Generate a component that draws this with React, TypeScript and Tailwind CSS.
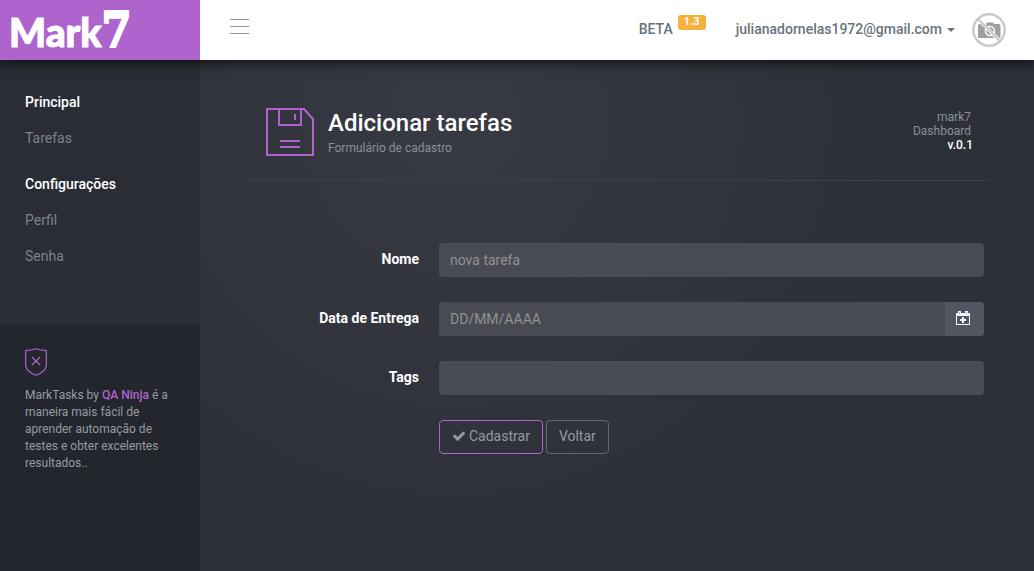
import React from "react";

function Logo() {
  return (
    <a
      href="#"
      aria-label="Mark7"
      className="flex h-[60px] w-[200px] shrink-0 items-start bg-[#ae63cd] pl-[9px] text-white"
    >
      <span className="pt-0.5 font-['Lato'] text-[39px] leading-[60px] font-black [-webkit-text-stroke:1px_white]">
        Mark
      </span>
      <span className="pt-0.5 font-['DejaVu_Serif_Condensed','DejaVu_Serif',serif] text-[48px] leading-[56px] font-bold [-webkit-text-stroke:2px_white]">
        7
      </span>
    </a>
  );
}

function Avatar() {
  return (
    <svg viewBox="0 0 34 34" className="size-[34px]" role="img" aria-label="Sem foto">
      <path
        d="M6 12.5q0-1.5 1.5-1.5H9V9.800h3V11h2l1-1.500h6l1 1.500h5q1.500 0 1.500 1.500v11q0 1.500-1.500 1.500h-19.500Q6 25 6 23.500z"
        fill="#a0a0a0"
      />
      <circle cx="18" cy="18" r="4.500" fill="#a0a0a0" stroke="#fff" strokeWidth="1.500" />
      <path d="M5.500 5.500l23 23" stroke="#fff" strokeWidth="3.600" />
      <path d="M5.500 5.500l23 23" stroke="#c9c9c9" strokeWidth="2.200" />
      <circle cx="17" cy="17" r="15.700" fill="none" stroke="#c9c9c9" strokeWidth="2.400" />
    </svg>
  );
}

function Header() {
  return (
    <header className="relative z-10 flex h-[60px] items-center bg-white text-sm font-medium text-[#6a737b] shadow-[0_0_12px_2px_rgba(0,0,0,0.8)]">
      <Logo />
      <button type="button" aria-label="Menu" className="ml-[29px] pb-2">
        <svg viewBox="0 0 20 16" className="h-4 w-5">
          <path d="M1 1.500h19M1 8.500h19M1 15.500h19" stroke="#8e979d" strokeWidth="1" />
        </svg>
      </button>
      <div className="ml-auto flex items-center pr-7">
        <a href="#beta" className="flex items-center pb-0.5">
          BETA
          <span className="mb-3.5 ml-[5px] h-[15px] w-7 rounded-[3px] bg-[#f7af3e] text-center text-[11px] leading-[14px] font-bold text-white">
            1.3
          </span>
        </a>
        <button type="button" className="ml-[30px] flex items-center gap-[5px] pb-0.5 font-medium">
          julianadornelas1972@gmail.com
          <svg viewBox="0 0 8 4" className="mt-0.5 h-1 w-2">
            <path d="M0 0h8L4 4z" fill="#6a737b" />
          </svg>
        </button>
        <div className="ml-[17px]">
          <Avatar />
        </div>
      </div>
    </header>
  );
}

const groups = [
  { title: "Principal", items: ["Tarefas"] },
  { title: "Configurações", items: ["Perfil", "Senha"] },
];

function Sidebar() {
  return (
    <aside className="flex w-[200px] shrink-0 flex-col bg-[#2a2d35]">
      <nav className="flex flex-col gap-2.5 pt-6 pb-[51px] text-sm">
        {groups.map((g) => (
          <div key={g.title}>
            <h2 className="px-[25px] py-2 font-medium text-white">{g.title}</h2>
            <ul>
              {g.items.map((i) => (
                <li key={i}>
                  <a href="#" className="block px-[25px] py-2 text-[#7d838b]">
                    {i}
                  </a>
                </li>
              ))}
            </ul>
          </div>
        ))}
      </nav>
      <div className="flex-1 bg-[#24262d] px-[25px] py-[23px]">
        <svg viewBox="0 0 22 28" className="h-7 w-[22px]" fill="none" stroke="#ae63cd" strokeWidth="1.200">
          <path d="M.7 2.600Q6.500 2.400 11 .7 15.500 2.400 21.300 2.600V17Q21.300 23.500 11 27.300.7 23.500.7 17z" />
          <path d="M7 9l8 8M15 9l-8 8" />
        </svg>
        <p className="mt-[11px] text-xs leading-[17px] text-[#949ba2]">
          MarkTasks by{" "}
          <a href="#" className="font-medium text-[#ae63cd]">
            QA Ninja
          </a>{" "}
          é a maneira mais fácil de aprender automação de testes e obter excelentes resultados..
        </p>
      </div>
    </aside>
  );
}

function PageTitle() {
  return (
    <div className="flex h-[121px] items-start border-b border-[#3d404c] pt-12 pr-4 pl-[21px]">
      <svg viewBox="0 0 48 48" className="size-12" fill="none" stroke="#ae63cd" strokeWidth="2">
        <path d="M1 1h37l9 10v36H1z" />
        <path d="M13 1v16h22V1M14 33h20M14 39h20M29 6v6" />
      </svg>
      <div className="ml-3.5">
        <h1 className="text-2xl leading-[30px] font-medium text-white">Adicionar tarefas</h1>
        <p className="text-xs leading-5 text-[#8a9098]">Formulário de cadastro</p>
      </div>
      <div className="mt-0.5 ml-auto text-right text-xs leading-[14px] text-[#8a9098]">
        <p className="pr-0.5">
          mark7
          <br />
          Dashboard
        </p>
        <p className="font-medium text-white">v.0.1</p>
      </div>
    </div>
  );
}

const row = "grid grid-cols-[160px_1fr] items-center gap-x-5";
const label = "pb-0.5 text-right text-sm font-bold text-white";
const field =
  "h-[34px] w-full min-w-0 rounded bg-[#494b54] px-[11px] text-sm text-[#c0c4c8] outline-none placeholder:text-[#919191]";

function TaskForm() {
  return (
    <form className="mt-[62px] flex flex-col gap-[25px] pr-[5px] pl-3.5" onSubmit={(e) => e.preventDefault()}>
      <div className={row}>
        <label htmlFor="nome" className={label}>
          Nome
        </label>
        <input id="nome" type="text" placeholder="nova tarefa" className={field} />
      </div>
      <div className={row}>
        <label htmlFor="data" className={label}>
          Data de Entrega
        </label>
        <div className="flex overflow-hidden rounded bg-[#494b54]">
          <input id="data" type="text" placeholder="DD/MM/AAAA" className={field} />
          <button
            type="button"
            aria-label="Abrir calendário"
            className="flex w-[39px] shrink-0 items-center bg-[#535561] pb-0.5 pl-[11px]"
          >
            <svg viewBox="0 0 14 14" className="size-3.5" shapeRendering="crispEdges">
              <path
                fillRule="evenodd"
                fill="#f2f5f7"
                d="M0 2h2V0h3v2h4V0h3v2h2v12H0zM1 5v8h12V5z"
              />
              <path d="M3 1h1v2H3zM10 1h1v2h-1z" fill="#9fb5c4" />
              <path d="M6 6h2v2h2v2H8v2H6v-2H4V8h2z" fill="#f2f5f7" />
            </svg>
          </button>
        </div>
      </div>
      <div className={row}>
        <label htmlFor="tags" className={label}>
          Tags
        </label>
        <input id="tags" type="text" className={field} />
      </div>
      <div className={row}>
        <div className="col-start-2 flex gap-[3px] text-sm text-[#949ba2]">
          <button
            type="submit"
            className="flex h-[34px] items-center gap-[3px] rounded border border-[#ae63cd] px-3 pb-0.5"
          >
            <svg viewBox="0 0 1792 1792" className="size-3.5" fill="currentColor">
              <path d="M1671 566q0 40-28 68l-724 724-136 136q-28 28-68 28t-68-28l-136-136-362-362q-28-28-28-68t28-68l136-136q28-28 68-28t68 28l294 295 656-657q28-28 68-28t68 28l136 136q28 28 28 68z" />
            </svg>
            Cadastrar
          </button>
          <button type="button" className="h-[34px] rounded border border-[#616779] px-3 pb-0.5">
            Voltar
          </button>
        </div>
      </div>
    </form>
  );
}

export default function App() {
  return (
    <div className="flex min-h-screen flex-col bg-[#2d3038] font-['Roboto',sans-serif]">
      <Header />
      <div className="flex flex-1 bg-[radial-gradient(circle_at_44%_12%,#383a43_0%,#33353e_30%,#2d3038_60%)]">
        <Sidebar />
        <main className="min-w-0 flex-1 px-[45px]">
          <PageTitle />
          <TaskForm />
        </main>
      </div>
    </div>
  );
}
